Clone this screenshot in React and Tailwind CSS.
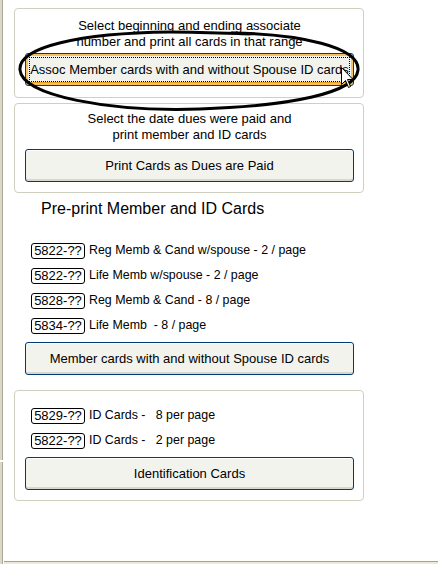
import React from 'react';

const rowsPre = [
  { code: '5822-??', text: 'Reg Memb & Cand w/spouse - 2 / page' },
  { code: '5822-??', text: 'Life Memb w/spouse - 2 / page' },
  { code: '5828-??', text: 'Reg Memb & Cand - 8 / page' },
  { code: '5834-??', text: 'Life Memb  - 8 / page' },
];

const rowsId = [
  { code: '5829-??', text: 'ID Cards -   8 per page' },
  { code: '5822-??', text: 'ID Cards -   2 per page' },
];

function XpButton({ children, focused }) {
  return (
    <button
      className={`w-[329px] h-[33px] rounded-[3px] border border-[#003c74] bg-[#f3f3ee] text-[13px] text-black flex items-stretch p-[3px] ${
        focused
          ? 'shadow-[inset_0_0_0_2px_#f8c060,inset_0_-3px_0_#e5a020]'
          : 'shadow-[inset_0_-2px_0_#d9d7cc,inset_0_1px_0_#ffffff]'
      }`}
    >
      <span
        className={`flex-1 flex items-center justify-center whitespace-pre ${
          focused ? 'border border-dotted border-black' : ''
        }`}
      >
        {children}
      </span>
    </button>
  );
}

function CodeRow({ code, text }) {
  return (
    <div className="h-[25px] flex items-center gap-[4px] whitespace-pre text-[12.4px]">
      <span className="w-[54px] h-[16px] border border-black rounded-[3px] text-center leading-[14px] text-[13px]">{code}</span>
      <span>{text}</span>
    </div>
  );
}

export default function App() {
  return (
    <div className="w-[438px] h-[564px] relative flex bg-white text-[13px] text-black font-['Liberation_Sans',Arial,sans-serif] overflow-hidden">
      <div className="w-[3px] flex flex-col">
        <div className="h-[460px] bg-[#dcd8c8] border-r border-[#aca899]" />
        <div className="h-[2px] bg-white" />
        <div className="flex-1 bg-[#dcd8c8] border-r border-[#aca899]" />
      </div>

      <div className="flex-1 flex flex-col">
        <div className="flex-1 pl-[11px] pt-[8px] flex flex-col">
          {/* range box */}
          <div className="w-[350px] h-[90px] border border-[#d0d0bf] rounded-[4px] pl-[10px] pr-[9px] pt-[9px] flex flex-col">
            <div className="text-center leading-[16px]">
              Select beginning and ending associate
              <br />
              number and print all cards in that range
            </div>
            <div className="mt-[3px]">
              <XpButton focused>Assoc Member cards with and without Spouse ID cards</XpButton>
            </div>
          </div>

          {/* dues box */}
          <div className="mt-[5px] w-[350px] h-[90px] border border-[#d0d0bf] rounded-[4px] pl-[10px] pr-[9px] pt-[7px] flex flex-col">
            <div className="text-center leading-[16px]">
              Select the date dues were paid and
              <br />
              print member and ID cards
            </div>
            <div className="mt-[6px]">
              <XpButton>Print Cards as Dues are Paid</XpButton>
            </div>
          </div>

          <div className="mt-[6px] pl-[27px] h-[20px] leading-[20px] text-[16px]">Pre-print Member and ID Cards</div>

          <div className="mt-[19px] pl-[17px]">
            {rowsPre.map((r, i) => (
              <CodeRow key={i} {...r} />
            ))}
          </div>

          <div className="mt-[4px] pl-[11px]">
            <XpButton>Member cards with and without Spouse ID cards</XpButton>
          </div>

          {/* id box */}
          <div className="mt-[15px] w-[350px] h-[111px] border border-[#d0d0bf] rounded-[4px] pl-[10px] pr-[9px] pt-[12px] flex flex-col">
            <div className="pl-[6px]">
              {rowsId.map((r, i) => (
                <CodeRow key={i} {...r} />
              ))}
            </div>
            <div className="mt-[4px]">
              <XpButton>Identification Cards</XpButton>
            </div>
          </div>
        </div>
        <div className="ml-[1px] h-[3px] border-t border-[#a0a0a0] bg-[#ece9d8]" />
      </div>

      {/* hand-drawn ellipse and cursor */}
      <svg className="absolute left-0 top-0 pointer-events-none" width="438" height="564">
        <path
          d="M 232 33 C 300 34, 360 47, 358 70 C 356 93, 290 106, 200 109 C 110 112, 22 96, 20 70 C 18 47, 80 33, 170 32 C 200 32, 222 33, 250 34"
          fill="none"
          stroke="#000"
          strokeWidth="3"
          strokeLinecap="round"
        />
        <path
          d="M 341.5 67.5 L 341.5 84.5 L 345.5 80.5 L 348.5 87.5 L 350.5 86.5 L 347.5 79.5 L 353 79.5 Z"
          fill="#fff"
          stroke="#000"
          strokeWidth="1"
          strokeLinejoin="miter"
        />
      </svg>
    </div>
  );
}
